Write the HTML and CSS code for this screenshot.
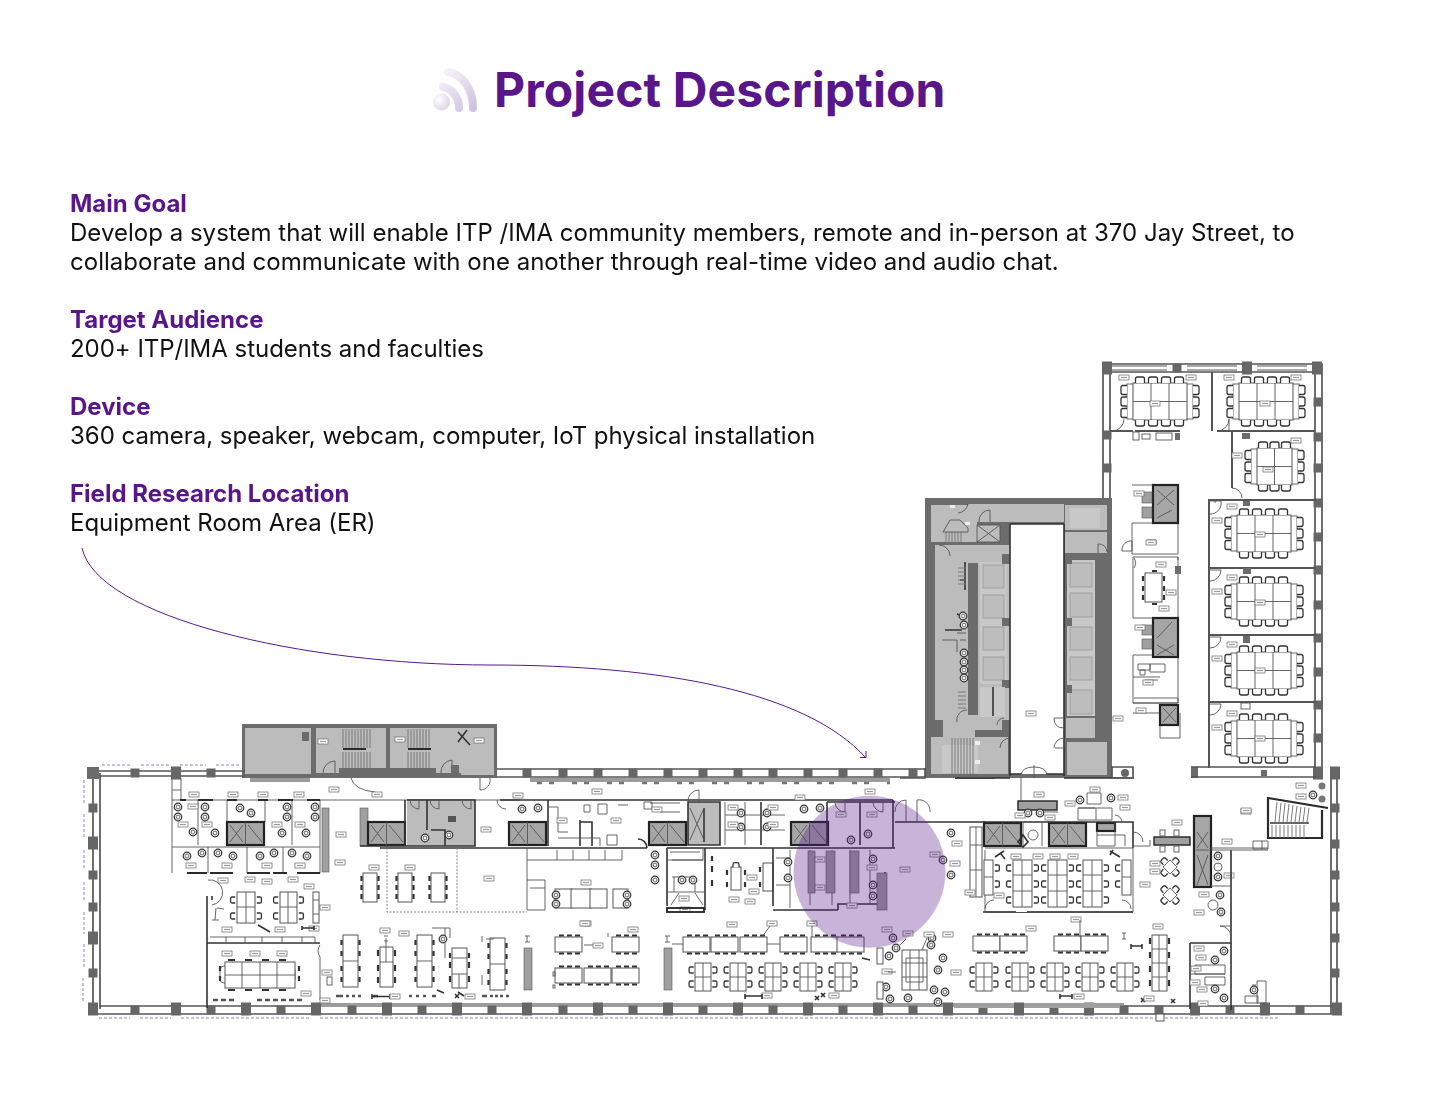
FILE: index.html
```html
<!DOCTYPE html>
<html lang="en">
<head>
<meta charset="utf-8">
<title>Project Description</title>
<link rel="stylesheet" href="styles.css">
</head>
<body>
<main class="page">
  <svg class="plan" viewBox="0 0 1440 1106" aria-hidden="true">
    <defs>
      <path id="c" class="chair" d="M-3 2.200V-.8Q-3-2.400-1.400-2.400H1.400Q3-2.400 3-.8V2.200"/>
      <path id="cw" class="chair" d="M-4.500 3V-1Q-4.500-3-2.500-3H2.500Q4.500-3 4.500-1V3"/>
      <g id="rc"><circle class="chairo" r="3.800"/><circle class="thin" r="1.900"/></g>
      <g id="lb"><rect class="tag" width="10" height="5"/><path class="tagl" d="M2 2.500H8"/></g>
      <rect id="cb" class="col" x="-5" y="-6.500" width="10" height="13"/>
      <rect id="cs" class="col" x="-4.500" y="-4.500" width="9" height="9"/>
      <g id="el"><rect class="lift" width="37" height="23"/><path class="thin" d="M3 3L16 20M16 3L3 20M21 3L35 20"/><path class="thin" d="M18.500 0V23"/></g>
      <g id="conf">
        <rect class="thin" x="-6" y="1" width="66" height="35"/>
        <rect class="desk" width="54" height="37"/>
        <path class="thin" d="M18 0V37M36 0V37M0 18.500H54"/>
        <use href="#cw" x="7" y="-3"/><use href="#cw" x="20" y="-3"/><use href="#cw" x="33" y="-3"/><use href="#cw" x="46" y="-3"/>
        <use href="#cw" transform="translate(7 40) scale(1 -1)"/><use href="#cw" transform="translate(20 40) scale(1 -1)"/><use href="#cw" transform="translate(33 40) scale(1 -1)"/><use href="#cw" transform="translate(46 40) scale(1 -1)"/>
        <use href="#cw" transform="translate(-9 7) rotate(-90)"/><use href="#cw" transform="translate(-9 18.500) rotate(-90)"/><use href="#cw" transform="translate(-9 30) rotate(-90)"/>
        <use href="#cw" transform="translate(63 7) rotate(90)"/><use href="#cw" transform="translate(63 18.500) rotate(90)"/><use href="#cw" transform="translate(63 30) rotate(90)"/>
      </g>
      <g id="conf2">
        <rect class="thin" x="-6" y="1" width="47" height="35"/>
        <rect class="desk" width="35" height="37"/>
        <path class="thin" d="M17.500 0V37M0 18.500H35"/>
        <use href="#cw" x="6" y="-3"/><use href="#cw" x="17.500" y="-3"/><use href="#cw" x="29" y="-3"/>
        <use href="#cw" transform="translate(6 40) scale(1 -1)"/><use href="#cw" transform="translate(17.500 40) scale(1 -1)"/><use href="#cw" transform="translate(29 40) scale(1 -1)"/>
        <use href="#cw" transform="translate(-9 7) rotate(-90)"/><use href="#cw" transform="translate(-9 18.500) rotate(-90)"/><use href="#cw" transform="translate(-9 30) rotate(-90)"/>
        <use href="#cw" transform="translate(44 7) rotate(90)"/><use href="#cw" transform="translate(44 18.500) rotate(90)"/><use href="#cw" transform="translate(44 30) rotate(90)"/>
      </g>
      <g id="pod">
        <rect class="desk" width="16" height="28"/><path class="thin" d="M8 0V28M0 14H16"/>
        <use href="#c" transform="translate(-3.500 7) rotate(-90)"/><use href="#c" transform="translate(-3.500 21) rotate(-90)"/>
        <use href="#c" transform="translate(19.500 7) rotate(90)"/><use href="#c" transform="translate(19.500 21) rotate(90)"/>
      </g>
      <g id="row">
        <rect class="desk" width="27" height="15"/>
        <path class="chr" d="M4-1.500H9M12-1.500H17M20-1.500H25M4 16.500H9M12 16.500H17M20 16.500H25"/>
      </g>
      <g id="vt">
        <rect class="desk" width="15" height="52"/><path class="thin" d="M0 26H15"/>
        <path class="chr" d="M-1.500 5V10M-1.500 16V21M-1.500 31V36M-1.500 42V47M16.500 5V10M16.500 16V21M16.500 31V36M16.500 42V47"/>
      </g>
      <g id="six">
        <rect class="desk" width="14" height="29"/>
        <path class="chr" d="M-1.500 3V8M-1.500 12V17M-1.500 21V26M15.500 3V8M15.500 12V17M15.500 21V26"/>
      </g>
      <g id="four"><rect class="thin" x="-5" y="-5" width="10" height="10" transform="rotate(45)"/><use href="#c" transform="translate(-6 -6) rotate(-45)"/><use href="#c" transform="translate(6 -6) rotate(45)"/><use href="#c" transform="translate(6 6) rotate(135)"/><use href="#c" transform="translate(-6 6) rotate(-135)"/></g>
      <linearGradient id="wave" gradientUnits="userSpaceOnUse" x1="442" y1="72" x2="474" y2="110">
        <stop offset="0" stop-color="#f7f3fa"/><stop offset="1" stop-color="#cfc0de"/>
      </linearGradient>
      <radialGradient id="dot" cx=".35" cy=".35" r=".85">
        <stop offset="0" stop-color="#fff"/><stop offset="1" stop-color="#d5c9e2"/>
      </radialGradient>
    </defs>

    <g class="soft">
      <!-- dashed outline -->
      <path class="dash" d="M102 765H131M141 765H171M180 765H206M216 765H241M253 765H312M84 780V804M84 814V838M84 850V870M84 882V902M84 912V934M84 944V968M83 978V1003M99 1018H130M140 1018H171M181 1018H311M320 1018H1280"/>

      <!-- north annex -->
      <rect class="wall" x="242" y="724" width="255" height="54"/>
      <rect class="g1" x="245" y="728" width="66" height="46"/>
      <rect class="wall" x="302" y="732" width="7" height="9"/>
      <rect class="g1" x="316" y="728" width="23" height="45"/>
      <rect class="g1" x="339" y="728" width="47" height="40"/>
      <rect class="g1" x="390" y="728" width="46" height="40"/>
      <rect class="g1" x="436" y="728" width="25" height="45"/>
      <rect class="g1" x="461" y="728" width="33" height="47"/>
      <path class="tread" d="M343 729V748M346 729V748M349 729V748M352 729V748M355 729V748M358 729V748M361 729V748M364 729V748M367 729V748M370 729V748M343 752V768M346 752V768M349 752V768M352 752V768M355 752V768M358 752V768M361 752V768M364 752V768M367 752V768M370 752V768M408 729V748M411 729V748M414 729V748M417 729V748M420 729V748M423 729V748M426 729V748M429 729V748M408 752V768M411 752V768M414 752V768M417 752V768M420 752V768M423 752V768M426 752V768M429 752V768"/>
      <path class="dk2" d="M343 749H366M408 749H431"/>
      <path class="dk" d="M458 732L470 745M467 730L458 742"/>
      <use href="#lb" x="318" y="739"/><use href="#lb" x="395" y="737"/><use href="#lb" x="474" y="738"/>
      <path class="thin" d="M323 773A12 12 0 0 1 335 761V773M441 773A12 12 0 0 1 452 760V773M480 778V790A10 10 0 0 0 490 778"/>
      <rect class="wall" x="451" y="765" width="8" height="8"/>
      <path class="thin" d="M351 778Q354 790 375 792"/>

      <!-- main shell -->
      <path class="wln" d="M93 771H245M93 776H245M497 769H925M497 777H925M93 773V1009M100 773V1009M1337 771V1014M1331 771V1014M93 1006H1337M93 1014H1337"/>
      <rect class="white" x="94" y="772" width="5" height="236"/>
      <path class="hatch" d="M320 1005H1124M250 780H310M530 780H890"/>
      <path class="tabs" d="M537 783H890"/>
      <rect class="wall" x="87" y="767" width="12" height="12"/>
      <g>
        <use href="#cs" x="135" y="773"/><use href="#cb" x="176" y="773"/><use href="#cs" x="211" y="773"/>
        <use href="#cb" x="93" y="843"/><use href="#cs" x="93" y="808"/><use href="#cs" x="93" y="875"/><use href="#cs" x="93" y="907"/><use href="#cb" x="93" y="938"/><use href="#cs" x="93" y="973"/><use href="#cb" x="93" y="1009"/>
        <use href="#cb" x="176" y="1009"/><use href="#cb" x="246" y="1009"/><use href="#cb" x="316" y="1009"/><use href="#cb" x="387" y="1009"/><use href="#cb" x="457" y="1009"/><use href="#cb" x="527" y="1009"/><use href="#cb" x="598" y="1009"/><use href="#cb" x="668" y="1009"/><use href="#cb" x="738" y="1009"/><use href="#cb" x="808" y="1009"/><use href="#cb" x="878" y="1009"/><use href="#cb" x="948" y="1009"/><use href="#cb" x="1019" y="1009"/><use href="#cb" x="1089" y="1009"/><use href="#cb" x="1195" y="1009"/><use href="#cb" x="1265" y="1009"/><use href="#cb" x="1337" y="1009"/>
        <use href="#cs" x="135" y="1010"/><use href="#cs" x="211" y="1010"/><use href="#cs" x="281" y="1010"/><use href="#cs" x="352" y="1010"/><use href="#cs" x="422" y="1010"/><use href="#cs" x="492" y="1010"/><use href="#cs" x="563" y="1010"/><use href="#cs" x="633" y="1010"/><use href="#cs" x="703" y="1010"/><use href="#cs" x="773" y="1010"/><use href="#cs" x="843" y="1010"/><use href="#cs" x="913" y="1010"/><use href="#cs" x="983" y="1010"/><use href="#cs" x="1054" y="1010"/><use href="#cs" x="1124" y="1010"/><use href="#cs" x="1159" y="1010"/><use href="#cs" x="1230" y="1010"/><use href="#cs" x="1300" y="1010"/>
        <use href="#cs" x="527" y="773"/><use href="#cs" x="563" y="773"/><use href="#cs" x="598" y="773"/><use href="#cs" x="633" y="773"/><use href="#cs" x="668" y="773"/><use href="#cs" x="703" y="773"/><use href="#cs" x="738" y="773"/><use href="#cs" x="773" y="773"/><use href="#cs" x="808" y="773"/><use href="#cs" x="843" y="773"/><use href="#cs" x="878" y="773"/><use href="#cs" x="913" y="773"/>
        <use href="#cb" x="1335" y="773"/><use href="#cs" x="1335" y="808"/><use href="#cs" x="1335" y="844"/><use href="#cs" x="1335" y="875"/><use href="#cs" x="1335" y="907"/><use href="#cs" x="1335" y="938"/><use href="#cs" x="1335" y="973"/>
      </g>

      <!-- west offices -->
      <path class="thin" d="M172 778V873M198 800V845M227 800V822M265 800V822M292 800V845M320 800V873M172 847H320M208 847V873M247 847V873M283 847V873M172 800H320M181 778V800M172 790H181M320 800H520"/>
      <path class="dk2" d="M180 800H186M198 800H213M227 800H237M258 800H268M278 800H293M307 800H320M187 873H207M210 873H233M247 873H270M273 873H287M297 873H320"/>
      <rect class="g2" x="322" y="808" width="7" height="64"/>
      <rect class="g2" x="360" y="808" width="8" height="38"/>
      <use href="#el" x="227" y="822"/><use href="#el" x="368" y="822"/><use href="#el" x="509" y="822"/><use href="#el" x="649" y="822"/><use href="#el" x="791" y="822"/>
      <g>
        <use href="#rc" x="178" y="807"/><use href="#rc" x="178" y="817"/><use href="#rc" x="205" y="807"/><use href="#rc" x="205" y="817"/><use href="#rc" x="240" y="808"/><use href="#rc" x="251" y="813"/><use href="#rc" x="287" y="807"/><use href="#rc" x="287" y="817"/><use href="#rc" x="315" y="807"/><use href="#rc" x="315" y="817"/><use href="#rc" x="193" y="832"/><use href="#rc" x="215" y="833"/><use href="#rc" x="282" y="833"/><use href="#rc" x="306" y="833"/><use href="#rc" x="187" y="856"/><use href="#rc" x="202" y="853"/><use href="#rc" x="218" y="853"/><use href="#rc" x="233" y="856"/><use href="#rc" x="260" y="856"/><use href="#rc" x="274" y="853"/><use href="#rc" x="292" y="853"/><use href="#rc" x="307" y="856"/>
        <use href="#lb" x="188" y="804"/><use href="#lb" x="178" y="822"/><use href="#lb" x="202" y="822"/><use href="#lb" x="272" y="822"/><use href="#lb" x="295" y="822"/><use href="#lb" x="186" y="863"/><use href="#lb" x="222" y="863"/><use href="#lb" x="262" y="863"/><use href="#lb" x="295" y="863"/><use href="#lb" x="189" y="792"/><use href="#lb" x="228" y="792"/><use href="#lb" x="258" y="792"/><use href="#lb" x="294" y="792"/><use href="#lb" x="329" y="787"/><use href="#lb" x="372" y="792"/><use href="#lb" x="336" y="832"/><use href="#lb" x="218" y="878"/><use href="#lb" x="245" y="877"/><use href="#lb" x="262" y="879"/><use href="#lb" x="288" y="877"/><use href="#lb" x="304" y="884"/><use href="#lb" x="320" y="905"/><use href="#lb" x="222" y="927"/><use href="#lb" x="275" y="927"/><use href="#lb" x="309" y="926"/>
      </g>

      <!-- restrooms & corridor rooms -->
      <rect class="g1" x="407" y="800" width="68" height="46"/>
      <path class="dk" d="M407 800H475V846H360M405 800V846M427 800V830M431 830H445V846M475 800V846"/>
      <path class="thin" d="M410 800A9 9 0 0 0 419 809V800M430 800A9 9 0 0 0 439 809V800M462 800A9 9 0 0 0 471 809V800"/>
      <rect class="dkf" x="448" y="816" width="8" height="6"/>
      <use href="#rc" x="425" y="838"/><use href="#rc" x="449" y="835"/>
      <use href="#lb" x="481" y="827"/><path class="thin" d="M497 800A9 9 0 0 0 506 809"/>
      <path class="dk" d="M500 800H893M500 848H647M667 848H720M775 848H895"/>
      <path class="dk" d="M548 800V846M580 820V846M580 822H592V846M647 848A9 9 0 0 0 638 839M380 848H500"/>
      <path class="thin" d="M548 807H558V832M558 838H600V846M558 832H568M584 805H590V812H584ZM598 804H607V814H598ZM618 805H628M644 802H652V809H644ZM607 835H617V845H607ZM650 803H680M660 812H680"/>
      <use href="#rc" x="522" y="809"/><use href="#rc" x="538" y="808"/><use href="#rc" x="804" y="809"/><use href="#rc" x="820" y="808"/>
      <use href="#lb" x="557" y="818"/><use href="#lb" x="611" y="818"/><use href="#lb" x="592" y="789"/><use href="#lb" x="513" y="793"/><use href="#lb" x="652" y="807"/><use href="#lb" x="795" y="795"/><use href="#lb" x="865" y="789"/>

      <rect class="g1" x="688" y="802" width="32" height="43"/>
      <path class="dk" d="M688 802H720V845H688ZM704 808V842M761 802V845M720 848H775"/>
      <path class="thin" d="M688 802A11 11 0 0 1 699 790V802M690 808L704 840M704 808L690 840M725 802V845M745 802V845M725 815H760M725 830H760M761 815H785M761 830H785"/>
      <use href="#rc" x="741" y="813"/><use href="#rc" x="767" y="813"/><use href="#rc" x="741" y="827"/><use href="#rc" x="767" y="827"/>
      <use href="#lb" x="728" y="805"/><use href="#lb" x="768" y="805"/><use href="#lb" x="728" y="822"/><use href="#lb" x="768" y="822"/>

      <path class="dk" d="M827 802H895M860 802V845M827 802V846M893 800V848M895 822H985"/>
      <path class="thin" d="M835 802A10 10 0 0 0 845 812V802M873 802A10 10 0 0 0 883 812V802"/>
      <use href="#rc" x="851" y="840"/><use href="#rc" x="868" y="834"/>
      <use href="#lb" x="836" y="812"/><use href="#lb" x="867" y="812"/>
      <path class="thin" d="M895 812A11 11 0 0 1 906 800V822M917 822V800A11 11 0 0 1 930 812"/>

      <!-- dashed zone & west tables -->
      <path class="dashg" d="M387 848V912H527M457 848V912"/>
      <path class="thin" d="M527 848V910H545V880H527M527 860H622M557 850V860M573 850V860M589 850V860M605 850V860M622 850V860M530 888H545"/>
      <use href="#six" x="363" y="873"/><use href="#six" x="398" y="873"/><use href="#six" x="431" y="873"/>
      <use href="#lb" x="369" y="865"/><use href="#lb" x="405" y="865"/><use href="#lb" x="484" y="876"/><use href="#lb" x="335" y="860"/>
      <rect class="desk" x="237" y="892" width="18" height="31"/><rect class="desk" x="280" y="892" width="17" height="31"/><rect class="desk" x="313" y="892" width="6" height="31"/>
      <path class="thin" d="M246 892V923M237 907H255M288 892V923M280 907H297M313 900H319M313 914H319"/>
      <use href="#c" transform="translate(233 900) rotate(-90)"/><use href="#c" transform="translate(233 916) rotate(-90)"/><use href="#c" transform="translate(259 900) rotate(90)"/><use href="#c" transform="translate(259 916) rotate(90)"/><use href="#c" transform="translate(276 900) rotate(-90)"/><use href="#c" transform="translate(276 916) rotate(-90)"/><use href="#c" transform="translate(301 900) rotate(90)"/><use href="#c" transform="translate(301 916) rotate(90)"/>
      <path class="dk" d="M207 896V1008M207 943H320"/>
      <path class="dk" d="M212 896V900"/>
      <path class="thin" d="M208 880A12 12 0 0 1 212 905M224 909L217 908M216 908L215 920M212 920H219M210 937H315V943M226 937V943M245 937V943M262 937V943M282 937V943M302 937V943M320 945A11 11 0 0 0 320 957V1000"/>
      <path class="dk" d="M258 925L270 932M302 928H314M302 926V930M314 926V930"/>
      <use href="#lb" x="222" y="951"/><use href="#lb" x="250" y="951"/><use href="#lb" x="277" y="951"/><use href="#lb" x="322" y="970"/><use href="#lb" x="301" y="991"/>
      <rect class="thin" x="220" y="966" width="75" height="17" rx="4"/>
      <rect class="desk" x="225" y="962" width="70" height="26"/>
      <path class="thin" d="M242 962V988M260 962V988M277 962V988M225 975H295"/>
      <path class="chr" d="M228 960H235M245 960H252M262 960H269M279 960H286M228 990H235M245 990H252M262 990H269M279 990H286M220 966V971M220 976V981M299 966V971M299 976V981"/>
      <path class="chr2" d="M213 1000H218M221 1000H226M229 1000H234M257 1000H262M265 1000H270M273 1000H278M281 1000H286M289 1000H294M297 1000H302"/>
      <rect class="thin" x="327" y="977" width="5" height="8"/>

      <!-- open area tables -->
      <use href="#vt" x="343" y="935"/><use href="#vt" x="417" y="935"/><use href="#vt" x="490" y="938"/>
      <rect class="desk" x="380" y="947" width="13" height="40"/><rect class="desk" x="452" y="948" width="15" height="40"/>
      <path class="thin" d="M380 962H393M386 947V962M452 974H467M459 974V988M432 928H450V938M445 928V958M452 958H467"/>
      <path class="chr" d="M378 950V956M378 965V971M378 977V983M395 950V956M395 965V971M395 977V983M450 953V958M450 962V968M450 976V982M469 953V958M469 962V968M469 976V982"/>
      <use href="#rc" x="443" y="939"/><use href="#lb" x="380" y="928"/><use href="#lb" x="399" y="931"/><use href="#lb" x="320" y="998"/>
      <path class="thin" d="M386 938V947M384 936H388M384 941H388"/>
      <path class="chr2" d="M336 996H343M346 996H349M352 996H355M358 996H361M373 996H378M409 996H412M416 996H419M423 996H426M432 996H436M482 996H487M490 996H493M495 996H498M500 996H503M506 996H509"/>
      <path class="dk" d="M372 994V999M372 996.500H390M390 994V999M437 990L444 993M455 994L459 998M459 994L455 998M458 992L464 996"/>
      <use href="#lb" x="390" y="994"/><use href="#lb" x="465" y="994"/>
      <path class="thin" d="M482 936V942M486 939H494M482 975V985"/>

      <rect class="g2" x="524" y="948" width="8" height="42"/><rect class="g2" x="664" y="948" width="8" height="42"/>
      <path class="thin" d="M527 936V942M525 936H530M525 942H530M667 936V942M665 936H670M665 942H670"/>
      <use href="#row" x="555" y="937"/><use href="#row" x="612" y="937"/><use href="#row" x="555" y="968"/><use href="#row" x="584" y="968"/><use href="#row" x="612" y="968"/>
      <use href="#row" x="683" y="937"/><use href="#row" x="711" y="937"/><use href="#row" x="740" y="937"/><use href="#row" x="780" y="937"/><use href="#row" x="811" y="937"/><use href="#row" x="837" y="937"/>
      <use href="#pod" x="695" y="963"/><use href="#pod" x="730" y="963"/><use href="#pod" x="765" y="963"/><use href="#pod" x="800" y="963"/><use href="#pod" x="835" y="963"/>
      <use href="#lb" x="593" y="943"/><use href="#lb" x="581" y="921"/><use href="#lb" x="628" y="927"/><use href="#lb" x="727" y="922"/><use href="#lb" x="767" y="921"/><use href="#lb" x="807" y="921"/><use href="#lb" x="762" y="993"/><use href="#lb" x="829" y="993"/>
      <path class="thin" d="M584 945H593M608 937V933M770 926L762 937M812 926V937M672 944H683M767 944H780"/>
      <path class="dk" d="M745 996H762M745 994V999M762 994V999M815 996L819 1000M819 996L815 1000M821 993L825 997M825 993L821 997M862 958L870 960"/>
      <rect class="thin" x="553" y="972" width="2" height="4"/><rect class="thin" x="553" y="985" width="2" height="3"/>

      <!-- lounge & central storage -->
      <path class="dk" d="M667 848V906M705 848V910"/>
      <path class="thin" d="M670 852H700M672 860H703M672 877H695M695 877V892M674 877V892M667 892H705M671 905L679 893M703 905L695 893"/>
      <rect class="thin" x="667" y="848" width="36" height="12"/>
      <use href="#rc" x="655" y="855"/><use href="#rc" x="655" y="865"/><use href="#rc" x="655" y="880"/><use href="#rc" x="682" y="880"/><use href="#rc" x="693" y="880"/>
      <use href="#lb" x="680" y="907"/><use href="#lb" x="679" y="896"/>
      <rect class="chr3" x="667" y="908" width="37" height="4"/>
      <path class="chr" d="M712 856V861M712 866V872M712 880V886"/>
      <rect class="desk" x="731" y="867" width="10" height="23"/>
      <path class="chr" d="M727 870V875M727 882V887M745 870V875M745 882V887"/>
      <use href="#c" x="736" y="865"/>
      <rect class="desk" x="763" y="863" width="10" height="28"/>
      <path class="chr" d="M760 867V872M760 882V887"/>
      <use href="#lb" x="747" y="875"/><use href="#lb" x="749" y="889"/><use href="#lb" x="729" y="897"/><use href="#lb" x="745" y="899"/>
      <rect class="desk" x="555" y="889" width="17" height="19"/><rect class="desk" x="571" y="889" width="20" height="19"/><rect class="desk" x="590" y="889" width="17" height="19"/><rect class="desk" x="613" y="889" width="15" height="19"/>
      <use href="#lb" x="581" y="880"/><use href="#lb" x="580" y="921"/>
      <use href="#rc" x="556" y="895"/><use href="#rc" x="556" y="904"/><use href="#rc" x="627" y="895"/><use href="#rc" x="627" y="904"/>

      <!-- equipment room (under circle) -->
      <path class="dk" d="M773 848V906M773 910H838M838 910V904H885V872"/>
      <path class="thin" d="M776 858H790M776 885H790M790 850V908M810 850V905M832 850V905M850 850V905M870 850V905"/>
      <rect class="g2" x="808" y="851" width="7" height="42"/><rect class="g2" x="826" y="851" width="9" height="42"/><rect class="g2" x="850" y="851" width="9" height="42"/>
      <rect class="g2" x="877" y="873" width="10" height="37"/>
      <use href="#rc" x="788" y="862"/><use href="#rc" x="788" y="878"/><use href="#rc" x="873" y="859"/><use href="#rc" x="873" y="885"/><use href="#rc" x="873" y="896"/>
      <use href="#lb" x="815" y="857"/><use href="#lb" x="815" y="885"/><use href="#lb" x="867" y="865"/><use href="#lb" x="900" y="867"/><use href="#lb" x="847" y="903"/><use href="#lb" x="930" y="852"/>

      <!-- far lounge -->
      <rect class="desk" x="902" y="950" width="25" height="40"/>
      <path class="thin" d="M910 950V990M919 950V990M902 963H927M902 977H927M906 958H923V982H906Z"/>
      <g>
        <use href="#rc" x="893" y="938"/><use href="#rc" x="896" y="948"/><use href="#rc" x="889" y="956"/><use href="#rc" x="886" y="987"/><use href="#rc" x="890" y="999"/><use href="#rc" x="908" y="998"/><use href="#rc" x="932" y="938"/><use href="#rc" x="943" y="958"/><use href="#rc" x="938" y="970"/><use href="#rc" x="934" y="990"/><use href="#rc" x="945" y="992"/><use href="#rc" x="938" y="1002"/><use href="#rc" x="931" y="945"/>
        <use href="#lb" x="882" y="927"/><use href="#lb" x="903" y="931"/><use href="#lb" x="924" y="932"/><use href="#lb" x="943" y="932"/><use href="#lb" x="882" y="969"/><use href="#lb" x="951" y="970"/>
      </g>
      <rect class="desk" x="877" y="982" width="6" height="17"/><rect class="desk" x="877" y="948" width="6" height="16"/>
      <path class="thin" d="M888 972H896M927 938L922 950M906 939L900 945"/>

      <!-- east large room -->
      <path class="thin" d="M985 822V846M985 850V912M985 912H1133V848H1133M985 848H1133"/>
      <path class="dk" d="M983 912H1133"/>
      <rect class="white" x="1016" y="908" width="11" height="4"/>
      <path class="thin" d="M985 909A9 9 0 0 1 994 900M1131 909A9 9 0 0 0 1122 900"/>
      <rect class="desk" x="984" y="860" width="9" height="35"/><rect class="desk" x="1122" y="860" width="9" height="35"/>
      <rect class="desk" x="1013" y="860" width="19" height="47"/><rect class="desk" x="1048" y="860" width="19" height="47"/><rect class="desk" x="1083" y="860" width="19" height="47"/>
      <path class="thin" d="M1022 860V907M1013 875H1032M1013 891H1032M1057 860V907M1048 875H1067M1048 891H1067M1092 860V907M1083 875H1102M1083 891H1102M984 877H993M1122 877H1131"/>
      <g>
        <use href="#c" transform="translate(997 868) rotate(90)"/><use href="#c" transform="translate(997 884) rotate(90)"/><use href="#c" transform="translate(1009 868) rotate(-90)"/><use href="#c" transform="translate(1009 884) rotate(-90)"/><use href="#c" transform="translate(1009 900) rotate(-90)"/>
        <use href="#c" transform="translate(1036 868) rotate(90)"/><use href="#c" transform="translate(1036 884) rotate(90)"/><use href="#c" transform="translate(1036 900) rotate(90)"/><use href="#c" transform="translate(1044 868) rotate(-90)"/><use href="#c" transform="translate(1044 884) rotate(-90)"/><use href="#c" transform="translate(1044 900) rotate(-90)"/>
        <use href="#c" transform="translate(1071 868) rotate(90)"/><use href="#c" transform="translate(1071 884) rotate(90)"/><use href="#c" transform="translate(1071 900) rotate(90)"/><use href="#c" transform="translate(1079 868) rotate(-90)"/><use href="#c" transform="translate(1079 884) rotate(-90)"/><use href="#c" transform="translate(1079 900) rotate(-90)"/>
        <use href="#c" transform="translate(1106 868) rotate(90)"/><use href="#c" transform="translate(1106 884) rotate(90)"/><use href="#c" transform="translate(1106 900) rotate(90)"/><use href="#c" transform="translate(1118 868) rotate(-90)"/><use href="#c" transform="translate(1118 884) rotate(-90)"/>
      </g>
      <rect class="desk" x="970" y="827" width="12" height="70"/>
      <path class="thin" d="M976 827V897M970 845H982M970 870H982"/>
      <use href="#rc" x="951" y="833"/><use href="#rc" x="951" y="875"/><use href="#rc" x="943" y="860"/>
      <use href="#lb" x="952" y="841"/><use href="#lb" x="950" y="861"/><use href="#lb" x="965" y="890"/><use href="#lb" x="994" y="893"/><use href="#lb" x="1011" y="854"/><use href="#lb" x="1033" y="854"/><use href="#lb" x="1050" y="854"/><use href="#lb" x="1068" y="854"/>
      <path class="dk" d="M995 857L1004 851M1001 854L1005 859M1110 851L1120 857M1110 855L1113 850"/>

      <!-- lifts east & reception -->
      <use href="#el" x="984" y="823"/><use href="#el" x="1049" y="823"/>
      <rect class="lift" x="1097" y="823" width="18" height="8"/>
      <path class="dk" d="M983 822H1133V848"/>
      <path class="thin" d="M1023 823V846M1042 823V846M1115 823V846H1097V831M1097 835H1125V846M1133 846H1150V840M1133 832A10 10 0 0 1 1143 842"/>
      <circle class="thin" cx="1033" cy="835" r="5"/>
      <path class="dk" d="M1018 842L1023 835L1028 842L1023 847Z"/>
      <rect class="hf" x="1018" y="801" width="39" height="9"/>
      <path class="thin" d="M1021 778V801M1047 812H1058M1040 812H1047"/>
      <path class="thin" d="M1078 808V820H1112V808H1078M1096 808V820M1078 808L1095 808M1087 793H1101V804H1087Z"/>
      <use href="#rc" x="1080" y="800"/><use href="#rc" x="1111" y="798"/><use href="#rc" x="1028" y="813"/><use href="#rc" x="1040" y="813"/>
      <use href="#lb" x="1034" y="792"/><use href="#lb" x="1015" y="813"/><use href="#lb" x="1045" y="815"/><use href="#lb" x="1065" y="801"/><use href="#lb" x="1090" y="787"/><use href="#lb" x="1118" y="795"/><use href="#lb" x="1120" y="805"/>
      <path class="thin" d="M1115 815A8 8 0 0 1 1122 822"/>

      <!-- east side -->
      <rect class="hf" x="1154" y="837" width="36" height="8"/>
      <rect class="thin" x="1160" y="830" width="5" height="6"/><rect class="thin" x="1174" y="830" width="5" height="6"/><rect class="thin" x="1160" y="846" width="5" height="6"/><rect class="thin" x="1174" y="846" width="5" height="6"/>
      <rect class="lift" x="1194" y="816" width="17" height="71"/>
      <path class="thin" d="M1197 832L1208 848M1208 832L1197 848M1197 855L1208 885M1208 855L1197 885M1196 850H1209"/>
      <use href="#four" x="1170" y="867"/><use href="#four" x="1170" y="895"/>
      <use href="#lb" x="1150" y="861"/><use href="#lb" x="1150" y="869"/><use href="#lb" x="1140" y="882"/><use href="#lb" x="1172" y="820"/><use href="#lb" x="1222" y="839"/><use href="#lb" x="1224" y="873"/><use href="#lb" x="1199" y="892"/><use href="#lb" x="1194" y="910"/><use href="#lb" x="1241" y="809"/>
      <use href="#rc" x="1218" y="856"/><circle class="thin" cx="1218" cy="867" r="4"/><use href="#rc" x="1218" y="877"/>
      <use href="#rc" x="1220" y="895"/><circle class="thin" cx="1213" cy="905" r="5"/><use href="#rc" x="1221" y="912"/>
      <path class="dk" d="M1231 850V1010M1231 850V862M1190 943H1231M1190 943V1009"/>
      <path class="thin" d="M1211 848H1268M1211 850H1268M1253 841H1268V849H1253ZM1262 841V849M1231 937A11 11 0 0 0 1220 926H1231M1211 886H1231"/>
      <path class="thin" d="M1190 974H1225M1195 965H1225V974H1195ZM1205 977H1225V985H1205Z"/>
      <use href="#rc" x="1224" y="951"/><use href="#rc" x="1215" y="960"/><use href="#rc" x="1215" y="989"/><use href="#rc" x="1224" y="998"/>
      <use href="#lb" x="1194" y="946"/><use href="#lb" x="1196" y="955"/><use href="#lb" x="1191" y="966"/><use href="#lb" x="1190" y="980"/><use href="#lb" x="1197" y="987"/><use href="#lb" x="1198" y="1001"/>
      <path class="thin" d="M1245 996H1258V1003H1245ZM1257 981H1266V1003H1257ZM1252 985H1256"/>
      <use href="#rc" x="1254" y="990"/>
      <rect class="desk" x="1152" y="935" width="15" height="56"/>
      <path class="thin" d="M1152 949H1167M1152 963H1167M1152 977H1167M1159 935V991"/>
      <path class="chr" d="M1150 938V944M1150 952V958M1150 966V972M1150 980V986M1169 938V944M1169 952V958M1169 966V972M1169 980V986"/>
      <use href="#lb" x="1153" y="924"/><use href="#lb" x="1071" y="917"/><use href="#lb" x="1026" y="926"/>
      <use href="#row" x="973" y="936"/><use href="#row" x="1000" y="936"/><use href="#row" x="1054" y="936"/><use href="#row" x="1081" y="936"/>
      <use href="#pod" x="976" y="963"/><use href="#pod" x="1012" y="963"/><use href="#pod" x="1047" y="963"/><use href="#pod" x="1082" y="963"/><use href="#pod" x="1117" y="963"/>
      <path class="dk" d="M1131 946H1142M1131 944V949M1142 944V949M1060 996H1072M1060 994V999M1072 994V999M1141 998L1145 1002M1145 998L1141 1002M1171 999L1175 1003M1175 999L1171 1003"/>
      <use href="#lb" x="1074" y="994"/><use href="#lb" x="1144" y="996"/>
      <path class="thin" d="M1080 920V937M1124 933V939M1122 933H1126M1122 939H1126"/>
      <rect class="hatch2" x="954" y="1003" width="60" height="5"/><rect class="hatch2" x="1024" y="1003" width="96" height="5"/>
      <rect class="desk" x="1156" y="1014" width="8" height="7"/>

      <!-- stair NE -->
      <path class="dk2" d="M1268 839V798L1328 808M1268 838H1322V810"/>
      <path class="dk" d="M1270 823H1309"/>
      <path class="tread" d="M1277 802L1275 822M1281 803L1279 822M1285 803L1283 822M1289 804L1287 822M1293 805L1291 822M1297 806L1295 822M1301 807L1299 822M1305 807L1303 822M1309 808L1307 822M1272 825V838M1276 825V838M1280 825V838M1284 825V838M1288 825V838M1292 825V838M1296 825V838M1300 825V838M1304 825V838"/>
      <use href="#rc" x="1313" y="795"/><circle class="hatchc" cx="1322" cy="786" r="3.500"/><circle class="hatchc" cx="1322" cy="799" r="3.500"/>
      <use href="#lb" x="1296" y="783"/><use href="#lb" x="1296" y="794"/><use href="#lb" x="1241" y="808"/>

      <!-- north wing shell -->
      <path class="wln" d="M1103 364H1322V778M1103 372H1315V778M1103 364V498M1110 372V498"/>
      <rect class="white" x="1112" y="365" width="55" height="6"/><rect class="white" x="1187" y="365" width="50" height="6"/><rect class="white" x="1257" y="365" width="50" height="6"/>
      <path class="wln2" d="M1112 366H1167M1112 370H1167M1187 366H1237M1187 370H1237M1257 366H1307M1257 370H1307"/>
      <use href="#cb" x="1107" y="368"/><use href="#cs" x="1177" y="368"/><use href="#cb" x="1247" y="368"/><use href="#cb" x="1317" y="368"/>
      <use href="#cs" x="1107" y="435"/><use href="#cs" x="1107" y="468"/>
      <use href="#cs" x="1318" y="402"/><use href="#cs" x="1318" y="437"/><use href="#cs" x="1318" y="468"/><use href="#cs" x="1318" y="503"/><use href="#cs" x="1318" y="537"/><use href="#cs" x="1318" y="570"/><use href="#cs" x="1318" y="605"/><use href="#cs" x="1318" y="638"/><use href="#cs" x="1318" y="672"/><use href="#cs" x="1318" y="705"/><use href="#cs" x="1318" y="738"/><use href="#cb" x="1318" y="773"/>

      <path class="wln3" d="M1212 372V431M1110 431H1133M1135 431H1180M1217 431H1315M1232 432V488M1208 500H1316M1209 500V768M1209 568H1316M1209 635H1316M1209 702H1316"/>
      <path class="thin" d="M1112 431A12 12 0 0 0 1124 419M1217 431A12 12 0 0 0 1229 419V431M1232 488A10 10 0 0 1 1242 498M1215 503V500M1210 501H1221A11 11 0 0 1 1210 514M1210 570H1221A11 11 0 0 1 1210 581M1210 637H1221A11 11 0 0 1 1210 648M1210 704H1221A11 11 0 0 1 1210 715"/>
      <rect class="thin" x="1133" y="432" width="6" height="8"/><rect class="thin" x="1142" y="434" width="8" height="5"/><rect class="thin" x="1156" y="433" width="16" height="7"/>
      <rect class="wall" x="1175" y="433" width="5" height="7"/>
      <rect class="wall" x="1242" y="433" width="8" height="6"/><rect class="wall" x="1243" y="501" width="7" height="5"/><rect class="wall" x="1243" y="568" width="8" height="6"/><rect class="wall" x="1243" y="636" width="7" height="7"/><rect class="thin" x="1241" y="703" width="9" height="6"/>
      <rect class="wall" x="1191" y="767" width="7" height="11"/>
      <rect class="wall" x="1261" y="770" width="6" height="6"/>
      <path class="wln" d="M1191 767H1316M1191 777H1316"/>
      <use href="#conf" x="1133" y="383"/><use href="#conf" x="1239" y="383"/><use href="#conf2" x="1257" y="448"/><use href="#conf" x="1237" y="515"/><use href="#conf" x="1237" y="583"/><use href="#conf" x="1237" y="652"/><use href="#conf" x="1237" y="720"/>
      <g>
        <use href="#lb" x="1119" y="375"/><use href="#lb" x="1186" y="375"/><use href="#lb" x="1224" y="375"/><use href="#lb" x="1291" y="375"/><use href="#lb" x="1291" y="438"/><use href="#lb" x="1232" y="453"/><use href="#lb" x="1227" y="504"/><use href="#lb" x="1212" y="518"/><use href="#lb" x="1227" y="575"/><use href="#lb" x="1212" y="589"/><use href="#lb" x="1227" y="642"/><use href="#lb" x="1212" y="656"/><use href="#lb" x="1227" y="711"/><use href="#lb" x="1212" y="725"/>
        <use href="#lb" x="1150" y="401"/><use href="#lb" x="1260" y="401"/><use href="#lb" x="1263" y="467"/><use href="#lb" x="1255" y="532"/><use href="#lb" x="1255" y="600"/><use href="#lb" x="1255" y="668"/><use href="#lb" x="1255" y="736"/>
      </g>

      <!-- north wing core -->
      <path class="thin" d="M1132 485H1153M1132 523H1178V554H1132V523M1133 557H1178V618H1133V557M1133 655H1178V703H1133V655M1133 713H1160V738H1180V713M1133 677H1160M1133 703H1178M1134 698H1178V703M1178 557V560"/>
      <path class="thin" d="M1147 540H1156V544H1147ZM1122 551A9 9 0 0 1 1132 541V551H1122M1134 558A9 9 0 0 1 1134 568M1138 664H1150V670H1138ZM1150 664H1165V672H1150ZM1145 680H1158M1140 670H1145V675H1140Z"/>
      <rect class="lift" x="1153" y="485" width="25" height="38"/><rect class="lift" x="1153" y="618" width="25" height="39"/><rect class="lift" x="1160" y="705" width="18" height="20"/>
      <path class="thin" d="M1157 490L1174 505M1174 490L1157 505M1157 518L1172 510M1172 622L1157 638M1157 645L1174 655M1174 645L1157 655M1163 708L1176 722M1176 708L1163 722"/>
      <rect class="g2" x="1142" y="492" width="10" height="11"/><rect class="g2" x="1142" y="507" width="10" height="11"/><rect class="g2" x="1142" y="625" width="10" height="10"/><rect class="g2" x="1142" y="639" width="10" height="10"/>
      <rect class="desk" x="1145" y="573" width="17" height="29"/>
      <path class="chr" d="M1143 576V581M1143 586V591M1143 595V600M1164 576V581M1164 586V591M1164 595V600M1152 571H1157M1152 604H1157"/>
      <use href="#lb" x="1156" y="562"/><use href="#lb" x="1166" y="590"/><use href="#lb" x="1159" y="606"/><use href="#lb" x="1134" y="491"/><use href="#lb" x="1146" y="540"/><use href="#lb" x="1135" y="625"/><use href="#lb" x="1143" y="680"/><use href="#lb" x="1113" y="716"/><use href="#lb" x="1136" y="708"/>
      <rect class="wall" x="1175" y="566" width="6" height="8"/>

      <!-- core block -->
      <rect class="wall" x="925" y="498" width="187" height="280"/>
      <rect class="g1" x="931" y="505" width="46" height="37"/>
      <rect class="g1" x="968" y="504" width="42" height="18"/>
      <rect class="g1" x="1010" y="504" width="54" height="18"/>
      <rect class="g1" x="977" y="525" width="23" height="17"/>
      <path class="thin" d="M977 525H1000V542H977ZM977 525L1000 542M1000 525L977 542"/>
      <rect class="g1" x="935" y="545" width="75" height="185"/>
      <rect class="g1" x="935" y="730" width="40" height="8"/>
      <rect class="wall" x="968" y="563" width="10" height="152"/>
      <rect class="wall" x="925" y="720" width="18" height="30"/>
      <rect class="g3" x="980" y="562" width="27" height="122"/>
      <rect class="g1s" x="983" y="565" width="21" height="23"/><rect class="g1s" x="983" y="595" width="21" height="23"/><rect class="g1s" x="983" y="627" width="21" height="23"/><rect class="g1s" x="983" y="657" width="21" height="23"/>
      <rect class="wall" x="1002" y="554" width="8" height="10"/><rect class="wall" x="1002" y="618" width="8" height="8"/><rect class="wall" x="1002" y="680" width="8" height="8"/><rect class="wall" x="1002" y="720" width="8" height="10"/>
      <rect class="g3" x="980" y="687" width="25" height="30"/>
      <path class="dk" d="M993 687V716"/>
      <rect class="white" x="1010" y="524" width="54" height="250"/>
      <rect class="g1" x="1065" y="505" width="42" height="25"/>
      <rect class="g3" x="1070" y="508" width="30" height="20"/>
      <rect class="g1" x="1065" y="532" width="42" height="21"/>
      <rect class="g3" x="1067" y="560" width="28" height="156"/>
      <rect class="g1s" x="1070" y="563" width="22" height="24"/><rect class="g1s" x="1070" y="593" width="22" height="24"/><rect class="g1s" x="1070" y="627" width="22" height="23"/><rect class="g1s" x="1070" y="657" width="22" height="23"/><rect class="g1s" x="1070" y="690" width="22" height="24"/>
      <rect class="wall" x="1064" y="554" width="8" height="10"/><rect class="wall" x="1064" y="618" width="8" height="8"/><rect class="wall" x="1064" y="685" width="8" height="8"/><rect class="wall" x="1064" y="735" width="8" height="10"/>
      <rect class="g1" x="1066" y="718" width="29" height="20"/>
      <rect class="g1" x="1067" y="742" width="40" height="33"/>
      <rect class="g1" x="931" y="737" width="77" height="37"/>
      <rect class="g3" x="942" y="745" width="36" height="28"/>
      <path class="tread" d="M952 738V774M955 738V774M958 738V774M961 738V774M964 738V774M967 738V774M970 738V774M973 738V774M946 532V542M949 532V542M952 532V542M955 532V542M958 532V542M961 532V542"/>
      <path class="dk" d="M986 778H1010M1064 778H1112M1010 524H1064M1010 524V776M1064 524V776M1010 774H1021M1047 774H1064"/>
      <path class="thin" d="M1010 738A10 10 0 0 0 1000 748M990 522V510A11 11 0 0 0 979 522M1055 748H1064V738A10 10 0 0 0 1054 748M1021 775Q1022 767 1034 767M1047 775Q1046 767 1034 767M1034 765V778M968 504A11 11 0 0 1 958 513M1107 552A8 8 0 0 0 1098 544V553M939 545A11 11 0 0 1 950 556M967 710A10 10 0 0 0 957 722M1064 718H1054Q1054 728 1064 728M997 725A7 7 0 0 1 1004 718"/>
      <path class="dk" d="M965 562V590M965 580H960M957 614L965 617M945 630H962"/>
      <use href="#rc" x="963" y="616"/><use href="#rc" x="964" y="625"/><use href="#rc" x="964" y="653"/><use href="#rc" x="964" y="662"/><use href="#rc" x="964" y="670"/><use href="#rc" x="964" y="678"/>
      <path class="tread" d="M958 568H966M958 572H966M958 576H966M958 580H966M958 584H966M958 692H966M958 696H966M958 700H966M958 704H966M958 708H966"/>
      <path class="thin" d="M942 640H957V652M957 633H966M960 640H966"/>
      <path class="thin" d="M943 532L950 520H960L968 528V532H946Z"/>
      <rect class="dot" x="950" y="505" width="5" height="3"/><rect class="dot" x="965" y="522" width="5" height="3"/><rect class="dot" x="975" y="741" width="5" height="4"/><rect class="dot" x="975" y="760" width="5" height="4"/>
      <use href="#lb" x="1026" y="711"/>
      <path class="wln" d="M1112 767H1133V778H1112Z"/>
      <circle class="col" cx="1125" cy="773" r="4"/>
      <path class="wln" d="M925 768V778H900M1112 778H1134"/>
      <rect class="hatchln" x="955" y="777" width="40" height="2"/>
    </g>

    <circle class="spot" cx="869.500" cy="871.700" r="76"/>
    <path class="curve" d="M82 548C97 617 302 665 490 665C660 665 806 691 866 758M860 757.500H866V751"/>

    <g class="soft2">
      <circle cx="441.500" cy="102" r="8.500" fill="url(#dot)"/>
      <path class="ic1" d="M443 87C453 89 459 98 459 108" stroke="url(#wave)"/>
      <path class="ic1" d="M448 72C463 74 473 90 473 108" stroke="url(#wave)"/>
    </g>
  </svg>

  <header class="head">
    <h1 class="title">Project Description</h1>
  </header>

  <section class="info">
    <div class="block">
      <h2 class="label">Main Goal</h2>
      <p class="copy copy-wide">Develop a system that will enable ITP /IMA community members, remote and in-person at 370 Jay Street, to collaborate and communicate with one another through real-time video and audio chat.</p>
    </div>
    <div class="block">
      <h2 class="label">Target Audience</h2>
      <p class="copy copy-tight">200+ ITP/IMA students and faculties</p>
    </div>
    <div class="block">
      <h2 class="label">Device</h2>
      <p class="copy copy-tight">360 camera, speaker, webcam, computer, IoT physical installation</p>
    </div>
    <div class="block">
      <h2 class="label">Field Research Location</h2>
      <p class="copy copy-tight">Equipment Room Area (ER)</p>
    </div>
  </section>
</main>
</body>
</html>
```

FILE: styles.css
```css
* { box-sizing: border-box; }
html, body { margin: 0; padding: 0; background: #fff; }
body { font-family: Inter, "Liberation Sans", sans-serif; color: #111; }

.page { position: relative; width: 1440px; height: 1106px; overflow: hidden; }
.plan { position: absolute; left: 0; top: 0; width: 1440px; height: 1106px; }

.head { position: relative; padding: 60px 0 0 494px; height: 189px; }
.title { margin: 0; font-size: 48px; line-height: 60px; font-weight: 700; color: #59168b; letter-spacing: .13px; }

.info { position: relative; padding-left: 70px; width: 1300px; display: flex; flex-direction: column; gap: 29px; }
.label { margin: 0; font-size: 24px; line-height: 29px; font-weight: 700; color: #59168b; }
.copy { margin: 0; font-size: 24px; line-height: 29px; font-weight: 400; color: #111; }
.copy-wide { letter-spacing: .02px; }
.copy-tight { letter-spacing: -.03px; }

.soft { filter: blur(.55px); }
.soft2 { filter: blur(.7px); }

.chair { fill: #fff; stroke: #333; stroke-width: 1.3; }
.chairo { fill: #fff; stroke: #333; stroke-width: 1.2; }
.thin { fill: none; stroke: #555; stroke-width: .9; }
.tag { fill: #fff; stroke: #777; stroke-width: .8; }
.tagl { stroke: #999; stroke-width: 1.2; }
.col { fill: #666; }
.lift { fill: #a6a6a6; stroke: #222; stroke-width: 2.2; }
.desk { fill: #fff; stroke: #555; stroke-width: 1; }
.chr { fill: none; stroke: #333; stroke-width: 2.2; }
.chr2 { fill: none; stroke: #555; stroke-width: 2.5; }
.chr3 { fill: none; stroke: #222; stroke-width: 1.8; }
.dash { fill: none; stroke: #8a84c8; stroke-width: 1; stroke-dasharray: 3 2; }
.dashg { fill: none; stroke: #777; stroke-width: .9; stroke-dasharray: 2 1.5; }
.wall { fill: #6c6c6c; }
.g1 { fill: #bcbcbc; }
.g2 { fill: #a0a0a0; stroke: #555; stroke-width: .6; }
.g3 { fill: #c8c8c8; }
.g1s { fill: #bdbdbd; stroke: #a0a0a0; stroke-width: 1; }
.white { fill: #fff; }
.dot { fill: #eee; }
.tread { fill: none; stroke: #7a7a7a; stroke-width: 1; }
.dk { fill: none; stroke: #333; stroke-width: 1.6; }
.dk2 { fill: none; stroke: #2a2a2a; stroke-width: 2.2; }
.dkf { fill: #555; }
.wln { fill: none; stroke: #555; stroke-width: 1.7; }
.wln2 { fill: none; stroke: #555; stroke-width: 1.1; }
.wln3 { fill: none; stroke: #555; stroke-width: 2; }
.hatch { fill: none; stroke: #9c9c9c; stroke-width: 4; }
.tabs { fill: none; stroke: #777; stroke-width: 2.4; stroke-dasharray: 5 7 5 18; }
.hatch2 { fill: #a0a0a0; }
.hatchln { fill: #444; }
.hatchc { fill: #777; }
.hf { fill: #a0a0a0; stroke: #222; stroke-width: 1.4; }

.spot { fill: #5a1a8c; opacity: .33; }
.curve { fill: none; stroke: #59168b; stroke-width: 1; }

.ic1 { fill: none; stroke-width: 8; stroke-linecap: round; }
```
